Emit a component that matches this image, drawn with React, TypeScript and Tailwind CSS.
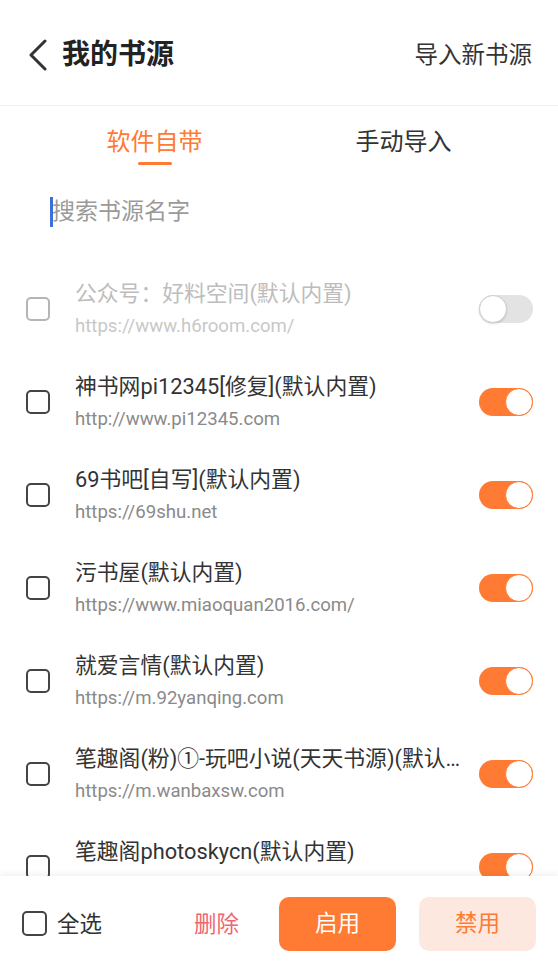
import React from 'react'

const sources = [
  { name: '公众号：好料空间(默认内置)', url: 'https://www.h6room.com/', on: false },
  { name: '神书网pi12345[修复](默认内置)', url: 'http://www.pi12345.com', on: true },
  { name: '69书吧[自写](默认内置)', url: 'https://69shu.net', on: true },
  { name: '污书屋(默认内置)', url: 'https://www.miaoquan2016.com/', on: true },
  { name: '就爱言情(默认内置)', url: 'https://m.92yanqing.com', on: true },
  { name: '笔趣阁(粉)①-玩吧小说(天天书源)(默认内置)', url: 'https://m.wanbaxsw.com', on: true },
  { name: '笔趣阁photoskycn(默认内置)', url: 'http://www.photoskycn.com', on: true },
]

function Toggle({ on }: { on: boolean }) {
  return (
    <div
      className={
        'w-[54px] h-[28px] rounded-full flex items-center shrink-0 ' +
        (on ? 'bg-[#ff7a33] justify-end' : 'bg-[#e3e3e3] justify-start')
      }
    >
      <div
        className={
          'w-[28px] h-[28px] rounded-full bg-white border ' +
          (on ? 'border-[#ff7a33]' : 'border-[#cfcfcf] shadow-[0_1px_2px_rgba(0,0,0,0.15)]')
        }
      />
    </div>
  )
}

function Checkbox({ dim }: { dim?: boolean }) {
  return (
    <div
      className={
        'w-[24px] h-[24px] rounded-[5px] border-2 shrink-0 ' +
        (dim ? 'border-[#b5b5b5]' : 'border-[#444]')
      }
    />
  )
}

export default function App() {
  return (
    <div
      className="w-[558px] h-[971px] flex flex-col bg-white overflow-hidden"
      style={{ fontFamily: 'Roboto, "Noto Sans CJK SC", sans-serif' }}
    >
      {/* Header */}
      <div className="h-[106px] shrink-0 flex items-center border-b border-[#eeeeee] pl-[28px] pr-[26px] pt-[5px]">
        <svg width="20" height="32" viewBox="0 0 20 32" fill="none" className="shrink-0">
          <polyline points="17,2 3,16 17,30" stroke="#333" strokeWidth="3" strokeLinecap="round" strokeLinejoin="round" />
        </svg>
        <div className="ml-[14px] text-[28px] leading-[36px] font-bold text-[#222]">我的书源</div>
        <div className="ml-auto text-[23.5px] leading-[32px] text-[#333]">导入新书源</div>
      </div>

      {/* Tabs */}
      <div className="h-[70px] shrink-0 flex px-[30px]">
        <div className="flex-1 flex flex-col items-center pt-[20px]">
          <div className="text-[24px] leading-[32px] text-[#ff7a33]">软件自带</div>
          <div className="mt-[4px] w-[34px] h-[3px] rounded-full bg-[#ff7a33]" />
        </div>
        <div className="flex-1 flex flex-col items-center pt-[20px]">
          <div className="text-[24px] leading-[32px] text-[#333]">手动导入</div>
        </div>
      </div>

      {/* Search */}
      <div className="h-[86px] shrink-0 flex items-start pl-[50px] pt-[21px]">
        <div className="w-[3px] h-[30px] bg-[#3d6fd9]" />
        <div className="ml-[-1px] text-[23px] leading-[30px] text-[#9a9a9a]">搜索书源名字</div>
      </div>

      {/* List */}
      <div className="flex-1 min-h-0 overflow-hidden">
        {sources.map((s, i) => {
          const dim = !s.on
          return (
            <div key={i} className="h-[93px] flex items-center pl-[26px] pr-[25px]">
              <Checkbox dim={dim} />
              <div className="ml-[25px] flex-1 min-w-0 pr-[14px]">
                <div className={'text-[21.8px] leading-[28px] truncate ' + (dim ? 'text-[#bdbdbd]' : 'text-[#333]')}>
                  {s.name}
                </div>
                <div className={'mt-[6px] text-[18.6px] leading-[24px] truncate ' + (dim ? 'text-[#c8c8c8]' : 'text-[#8a8a8a]')}>
                  {s.url}
                </div>
              </div>
              <Toggle on={s.on} />
            </div>
          )
        })}
      </div>

      {/* Bottom bar */}
      <div className="h-[95px] shrink-0 flex items-center bg-white pl-[22px] pr-[21px] shadow-[0_-3px_6px_rgba(0,0,0,0.05)] relative">
        <div className="w-[25px] h-[25px] rounded-[5px] border-2 border-[#444]" />
        <div className="ml-[10px] text-[22.5px] leading-[30px] text-[#333]">全选</div>
        <div className="ml-[92px] text-[22.5px] leading-[30px] text-[#f2646f]">删除</div>
        <div className="ml-[40px] w-[117px] h-[54px] rounded-[10px] bg-[#ff7a33] flex items-center justify-center text-[22.5px] text-white">
          启用
        </div>
        <div className="ml-[23px] w-[117px] h-[54px] rounded-[10px] bg-[#fde8df] flex items-center justify-center text-[22.5px] text-[#ff7a33]">
          禁用
        </div>
      </div>
    </div>
  )
}
